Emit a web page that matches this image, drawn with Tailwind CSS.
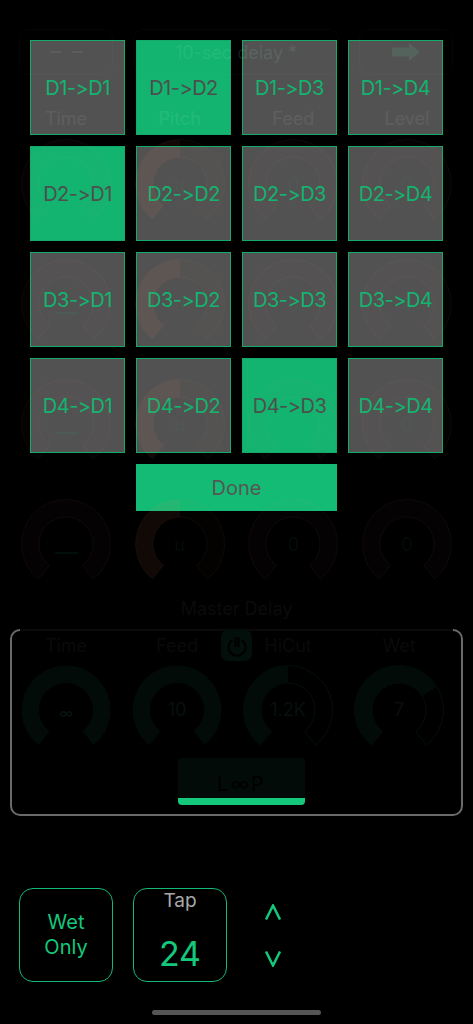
<!DOCTYPE html>
<html lang="en">
<head>
    <meta charset="UTF-8">
    <meta name="viewport" content="width=device-width, initial-scale=1.0">
    <title>Delay</title>
    <script src="https://cdn.jsdelivr.net/npm/@tailwindcss/browser@4"></script>
</head>
<body class="bg-black font-['Inter',sans-serif] antialiased [font-variant-ligatures:none] [font-feature-settings:'calt'_0]">
    <svg class="absolute w-0 h-0">
        <symbol id="knob" viewBox="0 0 90 90">
            <path class="fill-[#ff8c64]/[0.015] stroke-[#ffb090]/[0.055]" d="M17.6 80.1A44.5 44.5 0 1 1 72.4 80.1L61.6 66.3A27 27 0 1 0 28.4 66.3Z"/>
        </symbol>
        <symbol id="knob-half" viewBox="0 0 90 90">
            <path class="fill-[#ff8c64]/[0.012] stroke-[#ffb090]/[0.05]" d="M17.6 80.1A44.5 44.5 0 1 1 72.4 80.1L61.6 66.3A27 27 0 1 0 28.4 66.3Z"/>
            <path class="fill-[#ff8c64]/[0.06]" d="M17.6 80.1A44.5 44.5 0 0 1 45 .5L45 18A27 27 0 0 0 28.4 66.3Z"/>
        </symbol>
        <symbol id="knob-green" viewBox="0 0 90 90">
            <path class="fill-[#020b08]" d="M17.6 80.1A44.5 44.5 0 1 1 72.4 80.1L61.6 66.3A27 27 0 1 0 28.4 66.3Z"/>
        </symbol>
        <symbol id="knob-top" viewBox="0 0 90 90">
            <path class="fill-none stroke-[#03110c]" d="M17.6 80.1A44.5 44.5 0 1 1 72.4 80.1L61.6 66.3A27 27 0 1 0 28.4 66.3Z"/>
            <path class="fill-[#020b08]" d="M17.6 80.1A44.5 44.5 0 0 1 45 .5L45 18A27 27 0 0 0 28.4 66.3Z"/>
        </symbol>
        <symbol id="knob-wet" viewBox="0 0 90 90">
            <path class="fill-none stroke-[#03110c]" d="M17.6 80.1A44.5 44.5 0 1 1 72.4 80.1L61.6 66.3A27 27 0 1 0 28.4 66.3Z"/>
            <path class="fill-[#020b08]" d="M17.6 80.1A44.5 44.5 0 1 1 83 21.8L68 31A27 27 0 1 0 28.4 66.3Z"/>
        </symbol>
    </svg>

    <div class="relative w-[473px] h-[1024px] overflow-hidden">
        <!-- routing matrix, sits under the dimmed app -->
        <div class="absolute inset-0 z-0 grid grid-cols-[repeat(4,95px)] auto-rows-[95px] gap-[11px] pl-[30px] pt-[40px] text-[20px]">
            <div class="flex items-center justify-center tracking-[-0.5px] bg-[#525252] border-[1.5px] border-[#12ab6a] text-[#12b46f]">D1-&gt;D1</div>
            <div class="flex items-center justify-center tracking-[-0.5px] bg-[#12b46f] border-[1.5px] border-[#12ab6a] text-[#4c4f4d]">D1-&gt;D2</div>
            <div class="flex items-center justify-center tracking-[-0.5px] bg-[#525252] border-[1.5px] border-[#12ab6a] text-[#12b46f]">D1-&gt;D3</div>
            <div class="flex items-center justify-center tracking-[-0.5px] bg-[#525252] border-[1.5px] border-[#12ab6a] text-[#12b46f]">D1-&gt;D4</div>

            <div class="flex items-center justify-center tracking-[-0.5px] bg-[#12b46f] border-[1.5px] border-[#12ab6a] text-[#4c4f4d]">D2-&gt;D1</div>
            <div class="flex items-center justify-center tracking-[-0.5px] bg-[#525252] border-[1.5px] border-[#12ab6a] text-[#12b46f]">D2-&gt;D2</div>
            <div class="flex items-center justify-center tracking-[-0.5px] bg-[#525252] border-[1.5px] border-[#12ab6a] text-[#12b46f]">D2-&gt;D3</div>
            <div class="flex items-center justify-center tracking-[-0.5px] bg-[#525252] border-[1.5px] border-[#12ab6a] text-[#12b46f]">D2-&gt;D4</div>

            <div class="flex items-center justify-center tracking-[-0.5px] bg-[#525252] border-[1.5px] border-[#12ab6a] text-[#12b46f]">D3-&gt;D1</div>
            <div class="flex items-center justify-center tracking-[-0.5px] bg-[#525252] border-[1.5px] border-[#12ab6a] text-[#12b46f]">D3-&gt;D2</div>
            <div class="flex items-center justify-center tracking-[-0.5px] bg-[#525252] border-[1.5px] border-[#12ab6a] text-[#12b46f]">D3-&gt;D3</div>
            <div class="flex items-center justify-center tracking-[-0.5px] bg-[#525252] border-[1.5px] border-[#12ab6a] text-[#12b46f]">D3-&gt;D4</div>

            <div class="flex items-center justify-center tracking-[-0.5px] bg-[#525252] border-[1.5px] border-[#12ab6a] text-[#12b46f]">D4-&gt;D1</div>
            <div class="flex items-center justify-center tracking-[-0.5px] bg-[#525252] border-[1.5px] border-[#12ab6a] text-[#12b46f]">D4-&gt;D2</div>
            <div class="flex items-center justify-center tracking-[-0.5px] bg-[#12b46f] border-[1.5px] border-[#12ab6a] text-[#4c4f4d]">D4-&gt;D3</div>
            <div class="flex items-center justify-center tracking-[-0.5px] bg-[#525252] border-[1.5px] border-[#12ab6a] text-[#12b46f]">D4-&gt;D4</div>

            <div class="col-start-2 col-span-2 h-[47px] flex items-center justify-center bg-[#14bb74] text-[#555755]">Done</div>
        </div>

        <!-- app -->
        <div class="relative z-10 flex flex-col pt-[29px]">
            <!-- header -->
            <div class="flex gap-[20px] px-[19px] h-[46px]">
                <div class="w-[94px] flex items-center justify-center gap-[11px] rounded-[10px] border border-white/[0.025]">
                    <div class="w-[11px] h-[2px] bg-white/[0.06]"></div>
                    <div class="w-[11px] h-[2px] bg-white/[0.06]"></div>
                </div>
                <div class="w-[206px] flex items-center justify-center rounded-[10px] border border-white/[0.025] text-[18px] text-[#a0f0d0]/[0.12]">10-sec delay *</div>
                <div class="w-[94px] flex items-center justify-center rounded-[10px] border border-white/[0.025]">
                    <svg class="w-[28px] h-[18px]" viewBox="0 0 28 18"><path class="fill-[#6fe0b0]/[0.12]" d="M0 4.5H17V0L28 9 17 18V13.5H0Z"/></svg>
                </div>
            </div>

            <!-- strip labels -->
            <div class="flex justify-between px-[21px] h-[64px] pt-[30px] text-[18px] text-white/[0.07]">
                <div class="w-[90px] text-center">Time</div>
                <div class="w-[90px] text-center">Pitch</div>
                <div class="w-[90px] text-center">Feed</div>
                <div class="w-[90px] text-center">Level</div>
            </div>

            <!-- strip knobs -->
            <div class="flex flex-col gap-[30px] text-[18px] text-[#14c87c]/[0.07]">
                <div class="flex justify-between px-[21px]">
                    <div class="relative w-[90px] h-[90px]"><svg class="w-full h-full"><use href="#knob"/></svg></div>
                    <div class="relative w-[90px] h-[90px]"><svg class="w-full h-full"><use href="#knob-half"/></svg><div class="absolute inset-0 flex items-center justify-center">u</div></div>
                    <div class="relative w-[90px] h-[90px]"><svg class="w-full h-full"><use href="#knob"/></svg><div class="absolute inset-0 flex items-center justify-center">0</div></div>
                    <div class="relative w-[90px] h-[90px]"><svg class="w-full h-full"><use href="#knob"/></svg><div class="absolute inset-0 flex items-center justify-center">0</div></div>
                </div>
                <div class="flex justify-between px-[21px]">
                    <div class="relative w-[90px] h-[90px]"><svg class="w-full h-full"><use href="#knob"/></svg><div class="absolute inset-0 flex items-center justify-center"><div class="mt-[18px] w-[23px] h-[2px] bg-[#14c87c]/[0.07]"></div></div></div>
                    <div class="relative w-[90px] h-[90px]"><svg class="w-full h-full"><use href="#knob-half"/></svg><div class="absolute inset-0 flex items-center justify-center">u</div></div>
                    <div class="relative w-[90px] h-[90px]"><svg class="w-full h-full"><use href="#knob"/></svg><div class="absolute inset-0 flex items-center justify-center">0</div></div>
                    <div class="relative w-[90px] h-[90px]"><svg class="w-full h-full"><use href="#knob"/></svg><div class="absolute inset-0 flex items-center justify-center">0</div></div>
                </div>
                <div class="flex justify-between px-[21px]">
                    <div class="relative w-[90px] h-[90px]"><svg class="w-full h-full"><use href="#knob"/></svg><div class="absolute inset-0 flex items-center justify-center"><div class="mt-[18px] w-[23px] h-[2px] bg-[#14c87c]/[0.07]"></div></div></div>
                    <div class="relative w-[90px] h-[90px]"><svg class="w-full h-full"><use href="#knob-half"/></svg><div class="absolute inset-0 flex items-center justify-center">u</div></div>
                    <div class="relative w-[90px] h-[90px]"><svg class="w-full h-full"><use href="#knob"/></svg><div class="absolute inset-0 flex items-center justify-center">0</div></div>
                    <div class="relative w-[90px] h-[90px]"><svg class="w-full h-full"><use href="#knob"/></svg><div class="absolute inset-0 flex items-center justify-center">0</div></div>
                </div>
                <div class="flex justify-between px-[21px]">
                    <div class="relative w-[90px] h-[90px]"><svg class="w-full h-full"><use href="#knob"/></svg><div class="absolute inset-0 flex items-center justify-center"><div class="mt-[18px] w-[23px] h-[2px] bg-[#14c87c]/[0.07]"></div></div></div>
                    <div class="relative w-[90px] h-[90px]"><svg class="w-full h-full"><use href="#knob-half"/></svg><div class="absolute inset-0 flex items-center justify-center">u</div></div>
                    <div class="relative w-[90px] h-[90px]"><svg class="w-full h-full"><use href="#knob"/></svg><div class="absolute inset-0 flex items-center justify-center">0</div></div>
                    <div class="relative w-[90px] h-[90px]"><svg class="w-full h-full"><use href="#knob"/></svg><div class="absolute inset-0 flex items-center justify-center">0</div></div>
                </div>
            </div>

            <!-- master delay -->
            <div class="h-[40px] pt-[9px] text-center text-[18px] leading-[22px] text-[#0b0b0b]">Master Delay</div>
            <div class="relative mx-[10px] w-[453px] h-[187px] rounded-[10px] border-2 border-[#6a6a6a]">
                <div class="absolute -top-[2px] left-[8px] right-[8px] h-[2px] bg-[#0a0a0a]"></div>
                <div class="absolute -top-[1px] left-[209px] w-[31px] h-[31px] rounded-[7px] bg-[#030f0b] flex items-center justify-center">
                    <svg class="w-[22px] h-[22px] fill-none stroke-black stroke-2" viewBox="0 0 22 22"><path d="M6.5 5a8.5 8.5 0 1 0 9 0M9.5 2v10M12.5 2v10"/></svg>
                </div>
                <div class="flex gap-[21px] pl-[9px] pt-[2px] text-[18px] text-[#0a0a0a]">
                    <div class="w-[90px] text-center leading-[26px]">Time</div>
                    <div class="w-[90px] text-center leading-[26px]">Feed</div>
                    <div class="w-[90px] text-center leading-[26px]">HiCut</div>
                    <div class="w-[90px] text-center leading-[26px]">Wet</div>
                </div>
                <div class="flex gap-[21px] pl-[9px] pt-[5.5px] h-[95px] text-[18px] text-[#07100c]">
                    <div class="relative w-[90px] h-[90px]"><svg class="w-full h-full"><use href="#knob-green"/></svg><div class="absolute inset-0 flex items-center justify-center pt-[6px] text-[14px] font-bold">∞</div></div>
                    <div class="relative w-[90px] h-[90px]"><svg class="w-full h-full"><use href="#knob-green"/></svg><div class="absolute inset-0 flex items-center justify-center">10</div></div>
                    <div class="relative w-[90px] h-[90px]"><svg class="w-full h-full"><use href="#knob-top"/></svg><div class="absolute inset-0 flex items-center justify-center">1.2K</div></div>
                    <div class="relative w-[90px] h-[90px]"><svg class="w-full h-full"><use href="#knob-wet"/></svg><div class="absolute inset-0 flex items-center justify-center">7</div></div>
                </div>
                <div class="ml-[166px] mt-[4px] w-[127px] h-[47px] flex flex-col rounded-[4px] overflow-hidden bg-[#020b08]">
                    <div class="flex-1 flex items-end justify-center text-[20px] leading-[28px] tracking-[2px] text-black">L∞P</div>
                    <div class="h-[7px] bg-[#14c87c]"></div>
                </div>
            </div>

            <!-- bottom controls -->
            <div class="flex items-center px-[19px] pt-[72px]">
                <div class="w-[94px] h-[94px] flex items-center justify-center rounded-[14px] border border-[#12b878] text-center text-[20px] leading-[25px] text-[#14c87c]">Wet<br>Only</div>
                <div class="ml-[20px] w-[94px] h-[94px] flex flex-col items-center rounded-[14px] border border-[#12b878]">
                    <div class="text-[19px] leading-[24px] text-[#a8a8a8]">Tap</div>
                    <div class="mt-[21px] text-[34px] leading-[40px] text-[#14c87c]">24</div>
                </div>
                <div class="ml-[38px] flex flex-col gap-[31px]">
                    <svg class="w-[16px] h-[16px] fill-none stroke-[#14c87c] stroke-[2.5]" viewBox="0 0 16 16"><path d="M1 15.5 8 1.5 15 15.5"/></svg>
                    <svg class="w-[16px] h-[16px] fill-none stroke-[#14c87c] stroke-[2.5]" viewBox="0 0 16 16"><path d="M1 .5 8 14.5 15 .5"/></svg>
                </div>
            </div>

            <!-- home indicator -->
            <div class="mx-auto mt-[28px] w-[169px] h-[5px] rounded-full bg-[#555]"></div>
        </div>
    </div>
</body>
</html>
